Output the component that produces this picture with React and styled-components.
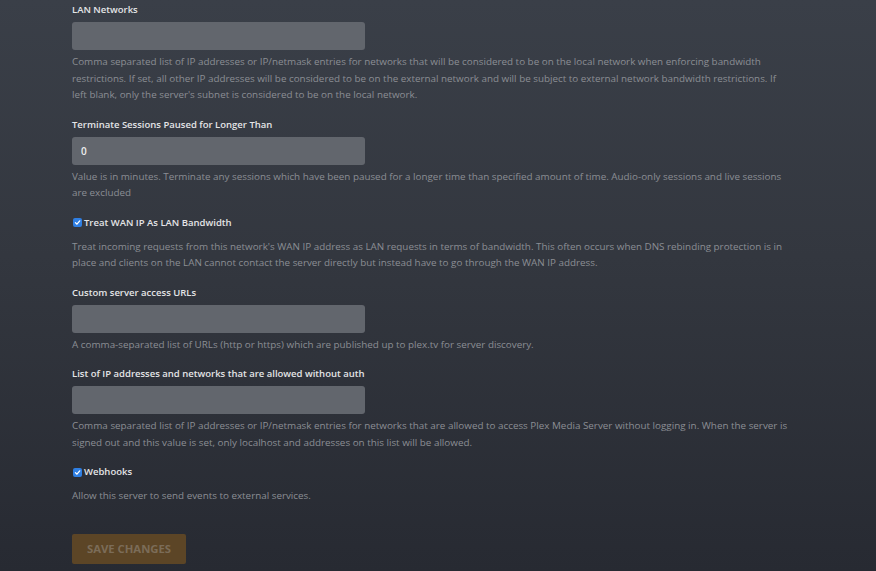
import React from 'react';
import styled, { createGlobalStyle } from 'styled-components';

const GlobalStyle = createGlobalStyle`
  html, body {
    margin: 0;
    padding: 0;
    height: 100%;
  }
  body {
    background: linear-gradient(180deg, #3a3f48 0%, #33373f 45%, #272a32 100%);
    font-family: "Open Sans", "Liberation Sans", sans-serif;
    -webkit-font-smoothing: antialiased;
  }
  #root {
    min-height: 571px;
  }
`;

const Page = styled.div`
  padding: 2px 72px 8px 72px;
  box-sizing: border-box;
  min-height: 571px;
`;

const Form = styled.form`
  display: flex;
  flex-direction: column;
  max-width: 720px;
`;

const Group = styled.div`
  display: flex;
  flex-direction: column;
  margin-bottom: 14px;
`;

const Label = styled.label`
  font-size: 9.5px;
  font-weight: 600;
  line-height: 16px;
  color: #e4e5e7;
  margin-bottom: 4px;
`;

const Input = styled.input`
  width: 293px;
  height: 28px;
  box-sizing: border-box;
  border: none;
  border-radius: 3px;
  background: #62666d;
  color: #eeeeee;
  font-family: inherit;
  font-size: 10px;
  font-weight: 600;
  padding: 0 9px;
  outline: none;
`;

const Help = styled.p`
  margin: 3px 0 0 0;
  font-size: 9.85px;
  line-height: 16.5px;
  color: #8b8e94;
`;

const CheckRow = styled.label`
  display: flex;
  align-items: center;
  gap: 2px;
  font-size: 9.5px;
  font-weight: 600;
  line-height: 16px;
  color: #e4e5e7;
`;

const Box = styled.span`
  width: 9px;
  height: 9px;
  margin-left: 1px;
  border-radius: 2px;
  background: #2f7fe3;
  display: inline-flex;
  align-items: center;
  justify-content: center;
`;

const CheckHelp = styled(Help)`
  margin-top: 7px;
`;

const SaveButton = styled.button`
  margin-top: 16px;
  align-self: flex-start;
  width: 114px;
  height: 30px;
  border: none;
  border-radius: 2px;
  background: #5c4526;
  color: #7b6c58;
  font-family: inherit;
  font-size: 11.3px;
  font-weight: 700;
  text-transform: uppercase;
  cursor: default;
`;

function Checkbox({ label }) {
  return (
    <CheckRow>
      <Box>
        <svg width="7" height="7" viewBox="0 0 10 10">
          <path d="M2 5.2 L4.2 7.4 L8.2 2.6" fill="none" stroke="#fff" strokeWidth="1.8" strokeLinecap="round" strokeLinejoin="round" />
        </svg>
      </Box>
      {label}
    </CheckRow>
  );
}

function Field({ label, value, help }) {
  return (
    <Group>
      <Label>{label}</Label>
      <Input defaultValue={value} />
      <Help>{help}</Help>
    </Group>
  );
}

export default function App() {
  return (
    <>
      <GlobalStyle />
      <Page>
        <Form onSubmit={(e) => e.preventDefault()}>
          <Field
            label="LAN Networks"
            help="Comma separated list of IP addresses or IP/netmask entries for networks that will be considered to be on the local network when enforcing bandwidth restrictions. If set, all other IP addresses will be considered to be on the external network and will be subject to external network bandwidth restrictions. If left blank, only the server's subnet is considered to be on the local network."
          />
          <Field
            label="Terminate Sessions Paused for Longer Than"
            value="0"
            help="Value is in minutes. Terminate any sessions which have been paused for a longer time than specified amount of time. Audio-only sessions and live sessions are excluded"
          />
          <Group>
            <Checkbox label="Treat WAN IP As LAN Bandwidth" />
            <CheckHelp>
              Treat incoming requests from this network's WAN IP address as LAN requests in terms of bandwidth. This often occurs when DNS rebinding protection is in place and clients on the LAN cannot contact the server directly but instead have to go through the WAN IP address.
            </CheckHelp>
          </Group>
          <Field
            label="Custom server access URLs"
            help="A comma-separated list of URLs (http or https) which are published up to plex.tv for server discovery."
          />
          <Field
            label="List of IP addresses and networks that are allowed without auth"
            help="Comma separated list of IP addresses or IP/netmask entries for networks that are allowed to access Plex Media Server without logging in. When the server is signed out and this value is set, only localhost and addresses on this list will be allowed."
          />
          <Group>
            <Checkbox label="Webhooks" />
            <CheckHelp>Allow this server to send events to external services.</CheckHelp>
          </Group>
          <SaveButton type="submit">Save Changes</SaveButton>
        </Form>
      </Page>
    </>
  );
}
